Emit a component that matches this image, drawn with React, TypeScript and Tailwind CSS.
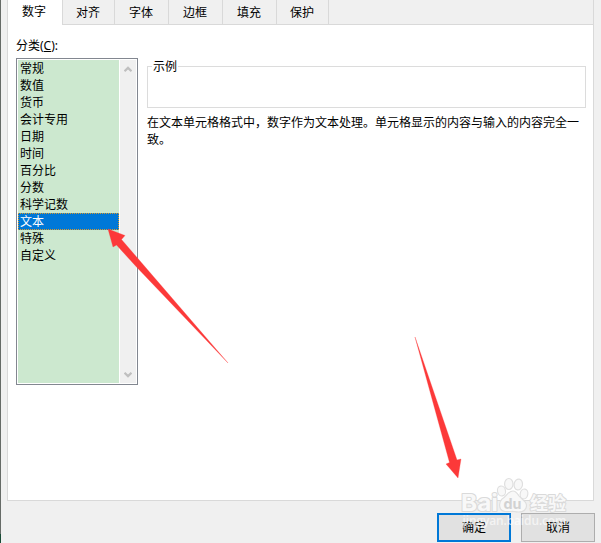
import React from "react";

const tabs = [
  { label: "对齐", style: "w-[52px] pl-[13px]" },
  { label: "字体", style: "w-[54px] pl-[14px]" },
  { label: "边框", style: "w-[54px] pl-[14px]" },
  { label: "填充", style: "w-[54px] pl-[14px]" },
  { label: "保护", style: "w-[52px] pl-[13px]" },
];

const categories = [
  "常规",
  "数值",
  "货币",
  "会计专用",
  "日期",
  "时间",
  "百分比",
  "分数",
  "科学记数",
  "文本",
  "特殊",
  "自定义",
];

const Chevron: React.FC<{ down?: boolean }> = ({ down }) => (
  <svg width="8" height="7" viewBox="0 0 8 7" className={down ? "rotate-180" : ""}>
    <path d="M0.5 5.3 L4 1.9 L7.5 5.3" fill="none" stroke="#bfbfbf" strokeWidth="2.2" />
  </svg>
);

const TabBar = () => (
  <div className="flex h-[25px] shrink-0">
    <div className="w-[54px] bg-white pl-[14px] leading-[24px]">数字</div>
    <div className="flex flex-1 border-b border-l border-[#d9d9d9] bg-[#f0f0f0]">
      {tabs.map((tab) => (
        <div key={tab.label} className={`${tab.style} border-r border-[#d9d9d9] leading-[26px]`}>
          {tab.label}
        </div>
      ))}
    </div>
  </div>
);

const CategoryList = () => (
  <div className="flex h-[327px] w-[122px] border border-[#828790] bg-white p-px">
    <ul className="w-[101px] bg-[#cce8cf]">
      {categories.map((item) => (
        <li
          key={item}
          className={`h-[17px] pl-[2px] leading-[17px] ${
            item === "文本"
              ? "bg-[#0078d7] text-white outline-1 -outline-offset-1 outline-dotted outline-[#d99a2b]"
              : ""
          }`}
        >
          {item}
        </li>
      ))}
    </ul>
    <div className="ml-px flex w-4 flex-col items-center justify-between bg-[#f0f0f0] pt-[6px] pb-[5px] pr-px">
      <Chevron />
      <Chevron down />
    </div>
  </div>
);

// pale logo stamped over the bottom right corner
const Watermark = () => (
  <svg
    className="pointer-events-none absolute left-[455px] top-[470px]"
    width="125"
    height="65"
    viewBox="455 470 125 65"
  >
    <g
      className="[paint-order:stroke]"
      fill="#f8f8f8"
      stroke="#dadada"
      strokeWidth="2"
      strokeLinejoin="round"
    >
      <text
        x="461"
        y="511"
        fontSize="23.5"
        fontWeight="700"
        fontFamily="Inter, sans-serif"
        textLength="37"
        lengthAdjust="spacingAndGlyphs"
      >
        Bai
      </text>
      <text
        x="530"
        y="509.5"
        fontSize="18"
        fontWeight="700"
        fontFamily="'Noto Sans CJK SC', sans-serif"
      >
        经验
      </text>
    </g>
    <g fill="#f8f8f8" stroke="#dfdfdf" strokeWidth="1.2">
      <ellipse cx="501.5" cy="491" rx="4" ry="5" transform="rotate(-12 501.5 491)" />
      <ellipse cx="508.8" cy="484" rx="4.2" ry="5.5" />
      <ellipse cx="518.3" cy="484.5" rx="4.2" ry="5.5" transform="rotate(10 518.3 484.5)" />
      <ellipse cx="524" cy="494" rx="3.8" ry="5" transform="rotate(12 524 494)" />
      <path d="M513 491 C508 491 507 496 502 499 C498 503 499 511 505 511.5 C509 512 511 511 514 511.5 C519 512.5 526 512.5 526.5 506 C527 501 522 500 519 496 C517 493 516 491 513 491 Z" />
    </g>
    <text
      x="503.5"
      y="509"
      fontSize="14.5"
      fontWeight="700"
      fontFamily="Inter, sans-serif"
      fill="#d2d2d2"
      textLength="18"
      lengthAdjust="spacingAndGlyphs"
    >
      du
    </text>
    <text
      x="462.5"
      y="525"
      fontSize="12"
      fontWeight="600"
      fontFamily="'Open Sans', sans-serif"
      fill="#ffffff"
      fillOpacity="0.65"
      textLength="104"
    >
      jingyan.baidu.com
    </text>
  </svg>
);

const Arrows = () => (
  <svg className="pointer-events-none absolute left-0 top-0" width="601" height="543" viewBox="0 0 601 543">
    <g fill="#fc3939" stroke="#fc3939" strokeWidth="0.3">
      <path d="M108 229 L125 235.5 L121.5 239.5 L228 363 L137 267.5 L116.5 245 L113 247 Z" />
      <path d="M415 337 L457 460 L461 459 L458 478 L446 464 L449.5 462.5 Z" />
    </g>
  </svg>
);

const App: React.FC = () => {
  return (
    <div className="relative flex h-[543px] w-[601px] overflow-hidden bg-[#f0f0f0] font-['Noto_Sans','Noto_Sans_CJK_SC',sans-serif] text-[12px] text-black">
      <div className="flex w-px flex-col bg-[#666b67]">
        <div className="mt-auto h-[9px] bg-[#184b35]" />
      </div>

      <div className="flex flex-1 flex-col pl-[6px]">
        <div className="flex h-[501px] w-[587px] flex-col border-x border-b border-[#d9d9d9] bg-white">
          <TabBar />

          <div className="flex pl-2">
            <div className="w-[122px]">
              <div className="h-[33px] pt-[12px] leading-[17px]">
                分类(<span className="underline">C</span>):
              </div>
              <CategoryList />
            </div>

            <div className="ml-[9px] w-[439px] pt-[41px]">
              <div className="h-[42px] border border-[#dcdcdc]">
                <span className="-mt-[9px] ml-1 block w-[26px] bg-white pl-px leading-[17px]">示例</span>
              </div>
              <p className="mt-[6px] leading-[17px]">
                在文本单元格格式中，数字作为文本处理。单元格显示的内容与输入的内容完全一
                <br />
                致。
              </p>
            </div>
          </div>
        </div>

        <div className="mt-[12px] flex gap-[10px] pl-[430px]">
          <button className="h-[29px] w-[74px] border-2 border-[#0078d7] bg-[#e1e1e1] leading-[25px]">确定</button>
          <button className="h-[29px] w-[74px] border border-[#adadad] bg-[#e1e1e1] leading-[27px]">取消</button>
        </div>
      </div>

      <Watermark />
      <Arrows />
    </div>
  );
};

export default App;
